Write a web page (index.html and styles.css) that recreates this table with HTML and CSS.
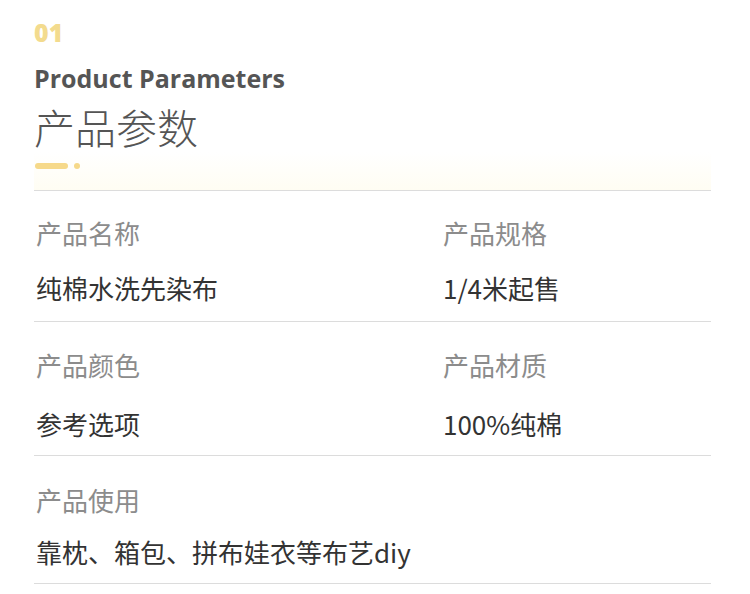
FILE: index.html
```html
<!DOCTYPE html>
<html lang="zh-CN">
<head>
<meta charset="utf-8">
<title>产品参数</title>
<link rel="stylesheet" href="styles.css">
</head>
<body>
<section class="params">
  <header class="head">
    <div class="num">01</div>
    <h2 class="en">Product Parameters</h2>
    <h1 class="cn">产品参数</h1>
    <div class="deco"><span class="bar"></span><span class="dot"></span></div>
  </header>
  <div class="row row-1">
    <div class="cell">
      <div class="label">产品名称</div>
      <div class="value">纯棉水洗先染布</div>
    </div>
    <div class="cell">
      <div class="label">产品规格</div>
      <div class="value">1/4米起售</div>
    </div>
  </div>
  <div class="row row-2">
    <div class="cell">
      <div class="label">产品颜色</div>
      <div class="value">参考选项</div>
    </div>
    <div class="cell">
      <div class="label">产品材质</div>
      <div class="value">100%纯棉</div>
    </div>
  </div>
  <div class="row row-3">
    <div class="cell">
      <div class="label">产品使用</div>
      <div class="value">靠枕、箱包、拼布娃衣等布艺diy</div>
    </div>
  </div>
</section>
</body>
</html>
```
FILE: styles.css
```css
html, body {
  margin: 0;
  padding: 0;
  background: #ffffff;
}
body {
  font-family: "Noto Sans CJK SC", "Noto Sans", sans-serif;
}
.params {
  width: 677px;
  margin-left: 34px;
}
.head {
  display: flex;
  flex-direction: column;
  background: linear-gradient(to bottom, #ffffff 0%, #ffffff 80%, #fffdf3 100%);
  border-bottom: 1px solid #dcdcdc;
}
.num {
  margin-top: 17px;
  padding-left: 0;
  font-family: "Open Sans", "Lato", sans-serif;
  font-weight: 800;
  font-size: 25px;
  line-height: 30px;
  color: #f3db8e;
}
.en {
  margin: 16px 0 0;
  font-family: "Open Sans", sans-serif;
  font-weight: 700;
  font-size: 25px;
  line-height: 30px;
  color: #555555;
}
.cn {
  margin: 9px 0 0;
  font-family: "Noto Sans CJK SC", sans-serif;
  font-weight: 300;
  font-size: 41px;
  line-height: 48px;
  color: #555555;
}
.deco {
  display: flex;
  align-items: center;
  gap: 6px;
  height: 8px;
  margin: 12px 0 20px 1px;
}
.bar {
  width: 33px;
  height: 6px;
  border-radius: 3px;
  background: #f6d98a;
}
.dot {
  width: 6px;
  height: 6px;
  border-radius: 50%;
  background: #f6d98a;
}
.row {
  display: grid;
  grid-template-columns: 407px 1fr;
  border-bottom: 1px solid #dcdcdc;
}
.row-1 {
  padding: 24px 0 15px;
}
.row-2 {
  padding: 25px 0 13px;
}
.row-3 {
  padding: 26px 0 13px;
}
.cell {
  padding-left: 2px;
}
.label {
  font-size: 26px;
  line-height: 36px;
  color: #8c8c8c;
}
.value {
  margin-top: 19px;
  font-size: 26px;
  line-height: 36px;
  color: #333333;
}
.row-2 .value {
  margin-top: 23px;
}
.row-3 .value {
  margin-top: 16px;
}
```
